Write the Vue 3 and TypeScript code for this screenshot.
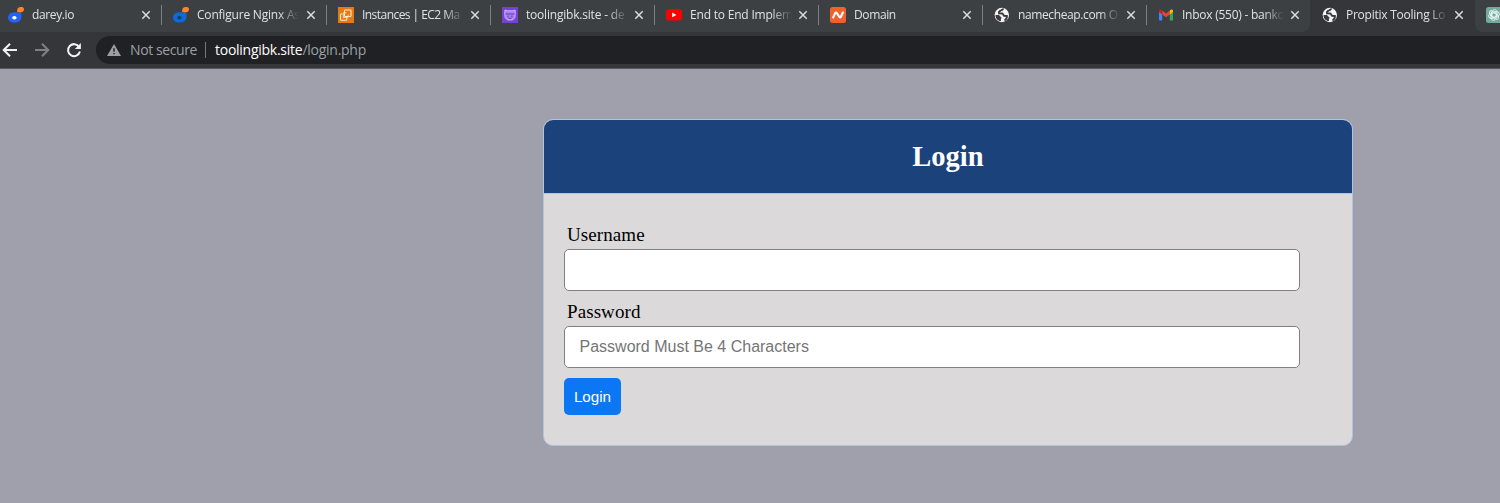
<script setup lang="ts">
interface Tab {
  title: string
  icon: string
  active?: boolean
}

const tabs: Tab[] = [
  { title: 'darey.io', icon: 'darey' },
  { title: 'Configure Nginx As', icon: 'darey' },
  { title: 'Instances | EC2 Ma', icon: 'aws' },
  { title: 'toolingibk.site - de', icon: 'github' },
  { title: 'End to End Implem', icon: 'youtube' },
  { title: 'Domain', icon: 'domain' },
  { title: 'namecheap.com O', icon: 'globe' },
  { title: 'Inbox (550) - banko', icon: 'gmail' },
  { title: 'Propitix Tooling Lo', icon: 'globe', active: true },
  { title: '', icon: 'gpt' },
]
</script>

<template>
  <div class="browser">
    <div class="tabs">
      <div v-for="(tab, i) in tabs" :key="i" class="tab" :class="[tab.icon, { active: tab.active }]">
        <svg class="favicon" viewBox="0 0 16 16">
          <g v-if="tab.icon === 'darey'">
            <path d="M8.2 5.3C3.6 4.6 0 7 0 10.4 0 13.6 2.8 15.6 6.5 15.6c4 0 6.9-2.2 6.9-5.4V6.2z" :fill="i === 0 ? '#2463f5' : '#0b6bdc'" />
            <ellipse cx="6.4" cy="10.8" rx="2.2" ry="1.8" :fill="i === 0 ? '#fff' : '#203a5c'" />
            <path d="M9.2 5V3.2C9.2 1 10.800 0 12.800 0 14.800 0 16 .6 16 2.300 16 4.500 14 5.400 11.800 5.400z" fill="#ff8427" />
          </g>
          <g v-else-if="tab.icon === 'aws'">
            <path d="M0 0h16v16H0z" fill="#e57a12" />
            <g fill="none" stroke="#ffe8ce" stroke-width="1.100">
              <rect x="6.500" y="3" width="6.500" height="6.500" rx=".8" />
              <path d="M4.500 7H3.300a.8.800 0 0 0-.8.800v4.700c0 .5.300.8.800.8H8c.5 0 .8-.3.800-.8v-1.300" />
              <path d="M8.500 5.700H5.300v4.800h4.800V7.500" stroke-width=".8" />
            </g>
          </g>
          <g v-else-if="tab.icon === 'github'">
            <path d="M0 0h16v16H0z" fill="#7542d4" />
            <path d="M3 3l2.300.8h5.400L13 3l.3 3.300-.5 4.400L10.500 13h-5L3.200 10.700l-.5-4.400z" fill="#a582e8" stroke="#cdb8ff" stroke-width="1" stroke-linejoin="round" />
            <path d="M3.500 7h9" stroke="#7542d4" stroke-width="1.200" />
            <path d="M5.300 9.200h1.500m2.400 0h1.500M6.500 11.200h3" fill="none" stroke="#6532b8" stroke-width="1" />
          </g>
          <g v-else-if="tab.icon === 'youtube'">
            <rect y="2.300" width="16" height="11.200" rx="3" fill="#f00" />
            <path d="M6.200 5.600v4.600l4.200-2.300z" fill="#fff" />
          </g>
          <g v-else-if="tab.icon === 'domain'">
            <rect width="16" height="16" rx="2.500" fill="#f0622b" />
            <path d="M3.200 10.500l2-4.400c.4-.9 1.200-.9 1.700 0l2.300 3.700c.5.900 1.300.9 1.700 0l2-4.300" fill="none" stroke="#fff" stroke-width="2.100" stroke-linecap="round" stroke-linejoin="round" />
          </g>
          <g v-else-if="tab.icon === 'globe'">
            <circle cx="7.800" cy="8" r="7.200" fill="#f4f5f6" />
            <path d="M9.700 2.300C8.300 2 7.700 3.300 6.300 3.700L5 4.900v1.400l3.500.2c1 .5.600 1.600 1.500 2.300l2.900.2c.3 1.800-1 3.500-2.400 4.500" fill="none" stroke="#393b3e" stroke-width="1.900" />
            <path d="M1.500 8h3.200c1.200.3.900 1.500 2.400 1.900.8.400.2 1.600-.2 1.900v2.300C3.800 13.900 1.300 11.300 1.500 8z" fill="#393b3e" />
          </g>
          <g v-else-if="tab.icon === 'gmail'">
            <path d="M1 4.500l3.200 2.300v6.700H2.100A1.100 1.100 0 0 1 1 12.400z" fill="#4285f4" />
            <path d="M11.800 6.800L15 4.500v7.900c0 .6-.5 1.100-1.100 1.100h-2.100z" fill="#34a853" />
            <path d="M4.200 3.500L8 6.400l3.800-2.900v3.900L8 10.300 4.200 7.400z" fill="#ea4335" />
            <path d="M1 5V4c0-1.600 1.500-1.900 2.500-1.100l.7.600v3.900z" fill="#c5221f" />
            <path d="M11.800 3.500l.7-.6C13.500 2.100 15 2.500 15 4v1l-3.200 2.400z" fill="#fbbc04" />
          </g>
          <g v-else>
            <rect width="16" height="16" rx="2.500" fill="#74aa9c" />
            <g fill="none" stroke="#e8f3f0" stroke-width=".9">
              <path v-for="n in 6" :key="n" :transform="`rotate(${n * 60} 8 8)`" d="M6 8.900V5.400c0-3 3.700-3.600 4.800-1.500M6 6.300L9.200 4.500l2.500 1.400" />
            </g>
          </g>
        </svg>
        <span class="title">{{ tab.title }}</span>
        <svg v-if="tab.title" class="close" viewBox="0 0 10 10"><path d="M1.300 1.300l7.400 7.400M8.700 1.300L1.300 8.700" /></svg>
      </div>
    </div>
    <div class="toolbar">
      <svg class="nav back" viewBox="0 0 16 16"><path d="M15 8H2M8 1.700L1.700 8 8 14.300" /></svg>
      <svg class="nav forward" viewBox="0 0 16 16"><path d="M1 8h13M8 1.700L14.300 8 8 14.300" /></svg>
      <svg class="nav reload" viewBox="0 0 16 16"><path d="M13.200 5A6 6 0 1 0 13.900 9.600" /><path class="tip" d="M14.900 1v6H8.900z" /></svg>
      <div class="address">
        <svg class="warning" viewBox="0 0 14 12"><path d="M7 0l7 12H0z" fill="#9aa0a6" /><path d="M7 4.300v3.500M7 8.900v1.400" stroke="#202124" stroke-width="1.400" /></svg>
        <span class="insecure">Not secure</span>
        <span class="divider"></span>
        <span class="host">toolingibk.site</span><span class="path">/login.php</span>
      </div>
    </div>
    <main class="page">
      <section class="card">
        <h1>Login</h1>
        <form @submit.prevent>
          <label for="username">Username</label>
          <input id="username" type="text" />
          <label for="password">Password</label>
          <input id="password" type="password" placeholder="Password Must Be 4 Characters" />
          <button type="submit">Login</button>
        </form>
      </section>
    </main>
  </div>
</template>

<style>
body { margin: 0; background: #a09fac; overflow: hidden; }
</style>

<style scoped>
* { box-sizing: border-box; }
.browser { width: 1500px; height: 503px; overflow: hidden; display: flex; flex-direction: column; background: #a09fac; }
.tabs { display: flex; height: 32px; flex: none; background: #35363a; overflow: hidden; }
.tab { width: 164px; height: 32px; flex: none; display: flex; align-items: flex-start; padding-left: 12px; background: linear-gradient(#7d8185, #7d8185) 0 5px / 1px 20px no-repeat #3c4043; }
.tab:first-child { width: 161px; padding-left: 8px; background: #3c4043; }
.tab:nth-child(2) { width: 165px; }
.tab.gmail { border-bottom-right-radius: 8px; }
.tab.active { background: #35363a; }
.tab.gpt { background: #3c4043; border-bottom-left-radius: 8px; margin-left: 1px; padding-left: 11px; }
.favicon { width: 16px; height: 16px; flex: none; margin-top: 7px; }
.title { width: 102px; height: 24px; margin: 3px 0 0 8px; overflow: hidden; white-space: nowrap; font: 12px/24px "Open Sans", "Noto Sans", sans-serif; letter-spacing: -0.2px; color: #dfe2e5; -webkit-mask-image: linear-gradient(90deg, #000 80%, transparent 100%); mask-image: linear-gradient(90deg, #000 80%, transparent 100%); }
.tab:first-child .title, .domain .title, .globe .title { letter-spacing: -0.38px; }
.aws .title { letter-spacing: -0.55px; }
.gmail .title { letter-spacing: -0.25px; }
.globe.active .title { letter-spacing: -0.25px; }
.close { width: 10px; height: 10px; flex: none; margin: 10px 0 0 6px; fill: none; stroke: #dadce0; stroke-width: 1.500; }
.tab:nth-child(-n+2) .close { margin-left: 7px; }
.toolbar { height: 37px; flex: none; display: flex; align-items: flex-start; padding-top: 4px; background: #35363a; border-bottom: 1px solid #58595d; }
.nav { width: 16px; height: 16px; flex: none; margin-top: 6px; fill: none; stroke: #f1f3f4; stroke-width: 2; }
.back { margin-left: 2px; }
.forward { margin-left: 16px; stroke: #7e8083; }
.reload { margin-left: 16px; }
.tip { fill: #f1f3f4; stroke: none; }
.address { flex: 1; height: 28px; margin-left: 14px; padding-left: 11px; display: flex; align-items: center; border-radius: 14px 0 0 14px; background: #202124; font: 14px/28px "Open Sans", "Noto Sans", sans-serif; letter-spacing: -0.26px; color: #9aa0a6; white-space: nowrap; }
.warning { width: 14px; height: 12px; margin-right: 9px; }
.insecure { width: 75px; letter-spacing: -0.4px; }
.divider { width: 1px; height: 16px; margin-right: 9px; background: #75797d; }
.host { color: #fff; }
.page { flex: 1; background: #a09fac; }
.card { width: 810px; height: 327px; margin: 50px 0 0 543px; border: 1px solid #b0c4de; border-radius: 10px; background: #dbd9da; overflow: hidden; }
h1 { margin: 0; height: 74px; border-bottom: 1px solid #b0c4de; background: #1b427a; color: #fff; text-align: center; font: bold 28.500px/73px "Liberation Serif", serif; }
form { display: flex; flex-direction: column; align-items: flex-start; padding: 29px 20px 20px; }
label { height: 26px; margin-left: 3px; color: #000; font: 19px/23px "Liberation Serif", serif; letter-spacing: 0.08px; }
input { width: 736px; height: 42px; margin: 0 0 9px; padding: 5px 14.500px; border: 1px solid gray; border-radius: 5px; background: #fff; outline: none; font: 16px "Liberation Sans", Arial, sans-serif; }
input::placeholder { color: #757575; opacity: 1; }
button { width: 57px; height: 37px; margin-top: 1px; padding: 0; border: 0; border-radius: 5px; background: #0b77f4; color: #fff; font: 15.200px "Liberation Sans", Arial, sans-serif; }
</style>
